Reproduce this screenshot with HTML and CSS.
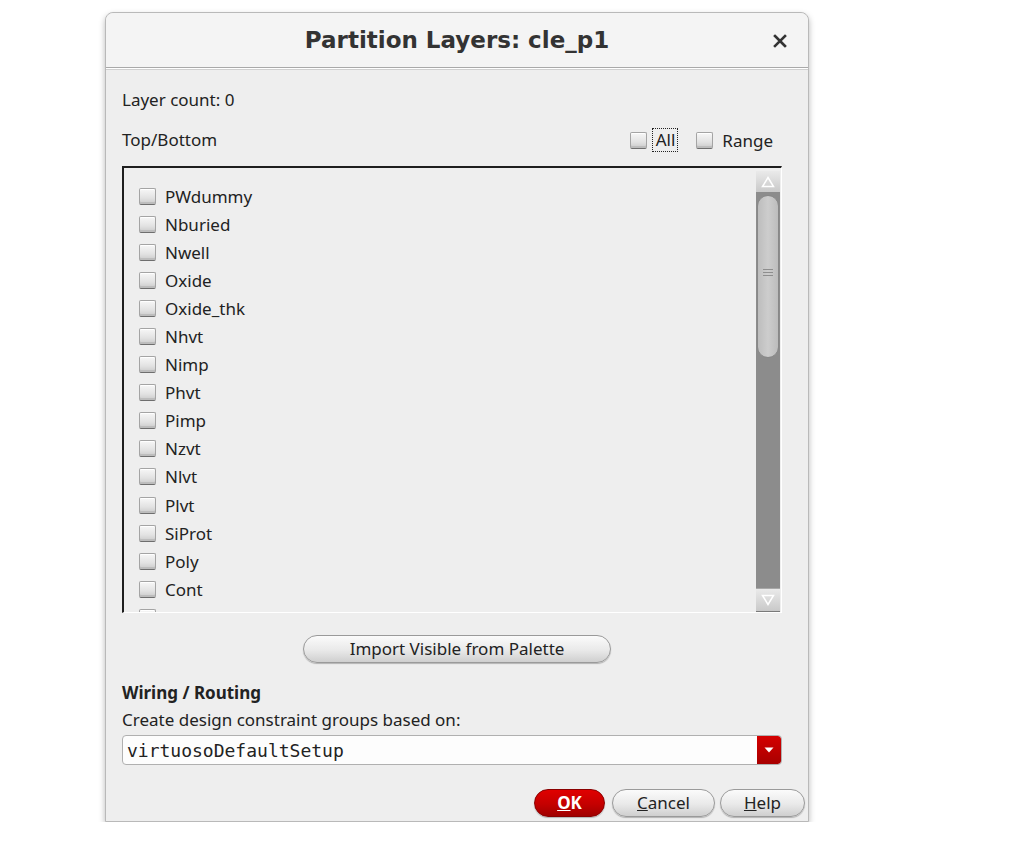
FILE: index.html
```html
<!DOCTYPE html>
<html>
<head>
<meta charset="utf-8">
<link rel="stylesheet" href="styles.css">
</head>
<body>
<div class="dialog">
  <div class="titlebar">
    <div class="title">Partition Layers: cle_p1</div>
    <div class="close">
      <svg width="14" height="14" viewBox="0 0 14 14"><path d="M2 2 L12 12 M12 2 L2 12" stroke="#333" stroke-width="2.6" stroke-linecap="square"/></svg>
    </div>
  </div>
  <div class="content">
    <div class="line count">Layer count: 0</div>
    <div class="tbrow">
      <span class="line">Top/Bottom</span>
      <span class="opts">
        <span class="cb"></span><span class="focus">All</span>
        <span class="cb cb-range"></span><span class="rlabel">Range</span>
      </span>
    </div>
    <div class="listbox">
      <div class="items">
        <div class="item"><span class="cb"></span>PWdummy</div>
        <div class="item"><span class="cb"></span>Nburied</div>
        <div class="item"><span class="cb"></span>Nwell</div>
        <div class="item"><span class="cb"></span>Oxide</div>
        <div class="item"><span class="cb"></span>Oxide_thk</div>
        <div class="item"><span class="cb"></span>Nhvt</div>
        <div class="item"><span class="cb"></span>Nimp</div>
        <div class="item"><span class="cb"></span>Phvt</div>
        <div class="item"><span class="cb"></span>Pimp</div>
        <div class="item"><span class="cb"></span>Nzvt</div>
        <div class="item"><span class="cb"></span>Nlvt</div>
        <div class="item"><span class="cb"></span>Plvt</div>
        <div class="item"><span class="cb"></span>SiProt</div>
        <div class="item"><span class="cb"></span>Poly</div>
        <div class="item"><span class="cb"></span>Cont</div>
        <div class="item"><span class="cb"></span>Metal1</div>
      </div>
      <div class="scrollbar">
        <div class="sbtn">
          <svg width="14" height="12" viewBox="0 0 14 12"><path d="M7 1.5 L12.5 10.5 L1.5 10.5 Z" fill="none" stroke="#fff" stroke-width="1.5"/></svg>
        </div>
        <div class="track">
          <div class="thumb">
            <div class="grip"></div>
          </div>
          <div class="rest"></div>
        </div>
        <div class="sbtn">
          <svg width="14" height="12" viewBox="0 0 14 12"><path d="M1.5 1.5 L12.5 1.5 L7 10.5 Z" fill="none" stroke="#fff" stroke-width="1.5"/></svg>
        </div>
      </div>
    </div>
    <div class="importrow">
      <button class="pill import">Import Visible from Palette</button>
    </div>
    <div class="line bold wiring">Wiring / Routing</div>
    <div class="line create">Create design constraint groups based on:</div>
    <div class="combo">
      <span class="combotext">virtuosoDefaultSetup</span>
      <span class="drop">
        <svg width="10" height="6" viewBox="0 0 10 6"><path d="M0.5 0.5 L9.5 0.5 L5 5.5 Z" fill="#fff"/></svg>
      </span>
    </div>
  </div>
  <div class="footer">
    <button class="pill ok"><u>O</u>K</button>
    <button class="pill cancel"><u>C</u>ancel</button>
    <button class="pill help"><u>H</u>elp</button>
  </div>
</div>
</body>
</html>
```
FILE: styles.css
```css
html, body {
  margin: 0;
  padding: 0;
  background: #ffffff;
}
body {
  font-family: "Noto Sans", "Open Sans", sans-serif;
  font-size: 17px;
  color: #222;
}
.dialog {
  margin-left: 105px;
  margin-top: 12px;
  width: 704px;
  height: 810px;
  box-sizing: border-box;
  background: #eeeeee;
  border: 1px solid #b9b9b9;
  border-radius: 8px 8px 0 0;
  box-shadow: 0 3px 6px rgba(0,0,0,0.28);
  display: flex;
  flex-direction: column;
}
.titlebar {
  height: 55px;
  flex: none;
  box-sizing: border-box;
  background: #f4f4f4;
  border-radius: 8px 8px 0 0;
  border-bottom: 1px solid #a9a9a9;
  box-shadow: 0 1px 0 #ffffff, 0 2px 0 #d0d0d0;
  display: flex;
  align-items: center;
  justify-content: center;
  position: relative;
}
.title {
  font-family: "DejaVu Sans", "Noto Sans", sans-serif;
  font-weight: bold;
  font-size: 23px;
  color: #333;
  margin-top: 0;
}
.close {
  position: absolute;
  right: 21px;
  top: 21px;
  width: 14px;
  height: 14px;
  display: flex;
}
.content {
  padding: 22px 26px 0 16px;
  display: flex;
  flex-direction: column;
}
.line {
  height: 20px;
  line-height: 20px;
  white-space: nowrap;
}
.bold { font-weight: bold; }
.tbrow {
  margin-top: 18px;
  height: 24px;
  display: flex;
  align-items: center;
  justify-content: space-between;
}
.opts {
  display: flex;
  align-items: center;
  margin-right: 9px;
}
.cb {
  width: 17px;
  height: 17px;
  flex: none;
  box-sizing: border-box;
  border: 1px solid #a4a4a4;
  border-bottom-color: #6e6e6e;
  border-radius: 2px;
  background: linear-gradient(#f7f7f7, #e2e2e2 60%, #cacaca);
  box-shadow: inset 0 -2px 0 #bdbdbd, inset 0 1px 0 #ffffff;
}
.focus {
  margin-left: 5px;
  border: 1px dotted #222;
  padding: 0 2px 0 3px;
  height: 22px;
  line-height: 22px;
}
.cb-range { margin-left: 18px; }
.rlabel { margin-left: 9px; }
.listbox {
  margin-top: 14px;
  height: 447px;
  box-sizing: border-box;
  border-top: 2px solid #1e1e1e;
  border-left: 2px solid #1e1e1e;
  border-right: 1px solid #ffffff;
  border-bottom: 1px solid #ffffff;
  display: flex;
  overflow: hidden;
}
.items {
  flex: 1;
  padding-top: 14px;
  padding-left: 15px;
  overflow: hidden;
}
.item {
  height: 28.1px;
  display: flex;
  align-items: center;
  white-space: nowrap;
}
.item .cb {
  margin-right: 9px;
}
.scrollbar {
  width: 24px;
  flex: none;
  margin: 3px 1px 0 0;
  display: flex;
  flex-direction: column;
}
.sbtn {
  height: 22px;
  flex: none;
  box-sizing: border-box;
  background: linear-gradient(#eaeaea, #c9c9c9);
  border-bottom: 1px solid #8c8c8c;
  display: flex;
  align-items: center;
  justify-content: center;
}
.sbtn:last-child {
  border-bottom: 1px solid #7a7a7a;
  border-top: 1px solid #a8a8a8;
  height: 24px;
}
.track {
  flex: 1;
  background: #8c8c8c;
  display: flex;
  flex-direction: column;
}
.thumb {
  margin: 2px 1px 0 1px;
  height: 163px;
  box-sizing: border-box;
  border: 1px solid #888;
  border-radius: 11px;
  background: linear-gradient(90deg, #bdbdbd, #cdcdcd 50%, #bcbcbc);
  display: flex;
  align-items: center;
  justify-content: center;
}
.grip {
  width: 10px;
  height: 9px;
  background: repeating-linear-gradient(#8e8e8e 0 1px, transparent 1px 3px);
  margin-top: -6px;
}
.rest { flex: 1; }
.importrow {
  margin-top: 22px;
  display: flex;
  justify-content: center;
  padding-left: 10px;
}
.pill {
  font-family: "Noto Sans", "Open Sans", sans-serif;
  font-size: 17px;
  color: #222;
  height: 28px;
  box-sizing: border-box;
  border: 1px solid #9a9a9a;
  border-radius: 14px;
  background: linear-gradient(#fbfbfb, #e9e9e9 55%, #cfcfcf);
  box-shadow: 0 1px 1px rgba(0,0,0,0.25);
  padding: 0;
  line-height: 26px;
}
.import {
  width: 308px;
}
.wiring { margin-top: 20px; }
.create { margin-top: 7px; }
.combo {
  margin-top: 5px;
  height: 30px;
  box-sizing: border-box;
  background: #fdfdfd;
  border: 1px solid #b0b0b0;
  border-radius: 4px;
  display: flex;
  align-items: center;
  overflow: hidden;
}
.combotext {
  flex: 1;
  padding-left: 4px;
  font-family: "DejaVu Sans Mono", "Liberation Mono", monospace;
  font-size: 18px;
  color: #222;
}
.drop {
  width: 24px;
  height: 28px;
  flex: none;
  background: linear-gradient(#d40000, #a80000);
  border-radius: 0 3px 3px 0;
  display: flex;
  align-items: center;
  justify-content: center;
}
.footer {
  margin-top: auto;
  padding: 0 3px 4px 0;
  display: flex;
  justify-content: flex-end;
}
.ok {
  width: 71px;
  background: linear-gradient(#e00000, #c40000 55%, #a00000);
  border-color: #8a0000;
  color: #fff;
  font-weight: bold;
}
.cancel { width: 103px; margin-left: 7px; }
.help { width: 85px; margin-left: 5px; }
```
